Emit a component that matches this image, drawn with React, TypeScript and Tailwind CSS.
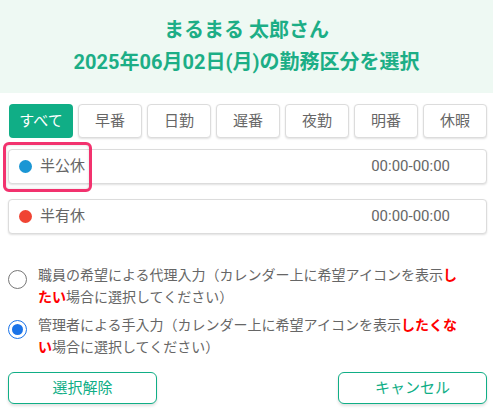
import { useState } from "react";

const tabs = ["すべて", "早番", "日勤", "遅番", "夜勤", "明番", "休暇"];

const shifts = [
  { name: "半公休", color: "#1a96d4", time: "00:00-00:00" },
  { name: "半有休", color: "#f04433", time: "00:00-00:00" },
];

const font = { fontFamily: "Roboto, 'Noto Sans CJK JP', sans-serif" };

function Radio({ checked }: { checked: boolean }) {
  return checked ? (
    <span className="mt-[6px] flex h-[19px] w-[19px] shrink-0 items-center justify-center rounded-full border-[1.5px] border-[#1a73e8] bg-white">
      <span className="h-[11px] w-[11px] rounded-full bg-[#1a73e8]" />
    </span>
  ) : (
    <span className="mt-[6px] h-[19px] w-[19px] shrink-0 rounded-full border-[1.5px] border-[#777]" />
  );
}

export default function App() {
  const [tab, setTab] = useState(0);
  const [mode, setMode] = useState(1);

  return (
    <div className="h-[415px] w-[493px] overflow-hidden bg-white" style={font}>
      {/* Header */}
      <div className="bg-[#eef9f3] pb-[15px] pt-[14px] text-center text-[20px] font-bold leading-[32px] text-[#1cae86]">
        <div>まるまる 太郎さん</div>
        <div>2025年06月02日(月)の勤務区分を選択</div>
      </div>

      {/* Tabs */}
      <div className="mt-[11px] flex gap-[5px] pl-[9px] pr-[6px]">
        {tabs.map((t, i) => (
          <button
            key={t}
            onClick={() => setTab(i)}
            className={
              i === tab
                ? "h-[34px] w-[64px] rounded-[4px] bg-[#10ae86] text-[15px] text-white"
                : "h-[34px] w-[64px] rounded-[4px] border border-[#dcdcdc] bg-white text-[15px] text-[#666] shadow-[0_1px_2px_rgba(0,0,0,0.12)]"
            }
          >
            {t}
          </button>
        ))}
      </div>

      {/* Shift rows */}
      <div className="mt-[11px] flex flex-col gap-[15px] pl-[8px] pr-[6px]">
        {shifts.map((s, i) => (
          <div key={s.name} className="relative">
            <div className="flex h-[35px] items-center rounded-[4px] border border-[#dcdcdc] bg-white pl-[10px] pr-[36px] text-[15px] text-[#666] shadow-[0_1px_2px_rgba(0,0,0,0.12)]">
              <span className="h-[13px] w-[13px] rounded-full" style={{ backgroundColor: s.color }} />
              <span className="ml-[8px]">{s.name}</span>
              <span className="ml-auto">{s.time}</span>
            </div>
            {i === 0 && (
              <div className="pointer-events-none absolute left-[-5px] top-[-7px] h-[50px] w-[89px] rounded-[6px] border-[3px] border-[#f2326e] shadow-[inset_0_0_3px_rgba(0,0,0,0.15)]" />
            )}
          </div>
        ))}
      </div>

      {/* Input mode */}
      <div className="mt-[30px] flex flex-col gap-[6px] pl-[8px] pr-[28px] text-[14px] leading-[22px] text-[#666]">
        <label className="flex cursor-pointer gap-[11px]" onClick={() => setMode(0)}>
          <Radio checked={mode === 0} />
          <span>
            職員の希望による代理入力（カレンダー上に希望アイコンを表示
            <b className="text-[#ff0000]">したい</b>
            場合に選択してください）
          </span>
        </label>
        <label className="flex cursor-pointer gap-[11px]" onClick={() => setMode(1)}>
          <Radio checked={mode === 1} />
          <span>
            管理者による手入力（カレンダー上に希望アイコンを表示
            <b className="text-[#ff0000]">したくない</b>
            場合に選択してください）
          </span>
        </label>
      </div>

      {/* Footer buttons */}
      <div className="mt-[14px] flex justify-between pl-[8px] pr-[6px]">
        <button className="h-[32px] w-[149px] rounded-[6px] border-[1.5px] border-[#10ae86] bg-white text-[15px] text-[#10ae86] shadow-[0_2px_3px_rgba(0,0,0,0.12)]">
          選択解除
        </button>
        <button className="h-[32px] w-[149px] rounded-[6px] border-[1.5px] border-[#10ae86] bg-white text-[15px] text-[#10ae86] shadow-[0_2px_3px_rgba(0,0,0,0.12)]">
          キャンセル
        </button>
      </div>
    </div>
  );
}
